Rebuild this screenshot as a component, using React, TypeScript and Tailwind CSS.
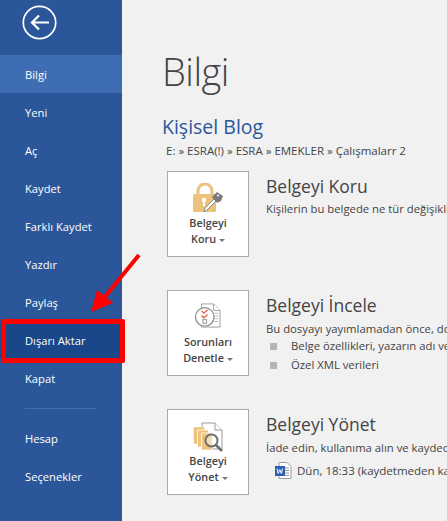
const font = { fontFamily: '"Open Sans", "Noto Sans", sans-serif' };

const items = ["Bilgi", "Yeni", "Aç", "Kaydet", "Farklı Kaydet", "Yazdır", "Paylaş", "Dışarı Aktar", "Kapat"];

function NavItem({ label }: { label: string }) {
  const bg = label === "Bilgi" ? "bg-[#3e6db3]" : label === "Dışarı Aktar" ? "bg-[#19478a]" : "";
  return (
    <div className={`h-[38px] flex items-center pl-[25px] pt-[2px] text-[11.2px] text-white whitespace-nowrap ${bg}`}>{label}</div>
  );
}

function LockIcon() {
  return (
    <svg width="32" height="30" viewBox="0 0 32 30">
      <path d="M6 12V8a7 7 0 0 1 14 0v4" fill="none" stroke="#edc27c" strokeWidth="3" />
      <rect x="1" y="11" width="23" height="18" rx="1.5" fill="#edc27c" />
      <circle cx="12" cy="17" r="2.2" fill="#fff" />
      <rect x="11" y="18" width="2" height="5" fill="#fff" />
      <path d="M12 28l1-3 9-9 2 2-9 9-3 2z" fill="#fff" stroke="#8a8a8a" strokeWidth="1" />
      <path d="M20 14l5-5 6 4-2 5-4 2-5-6z" fill="#7b7b7b" />
      <circle cx="26" cy="12.5" r="1" fill="#fff" />
    </svg>
  );
}

function InspectIcon() {
  return (
    <svg width="28" height="25" viewBox="0 0 30 27">
      <path d="M8 1h13l7 7v18H8z" fill="#fff" stroke="#9a9a9a" strokeWidth="1" />
      <path d="M21 1v7h7" fill="#fff" stroke="#9a9a9a" strokeWidth="1" />
      <path d="M22 11h4M22 14h4M22 17h4M22 20h4" stroke="#b5b5b5" strokeWidth="1" />
      <circle cx="11.5" cy="15" r="10" fill="#fff" stroke="#8f8f8f" strokeWidth="1.4" />
      <path d="M8 8.5l2.5 2.5 4-3.5M8 13.5l2.5 2.5 4-3.5" fill="none" stroke="#e0604c" strokeWidth="1.4" />
      <rect x="9.5" y="18" width="4" height="4" fill="#fff" stroke="#8f8f8f" strokeWidth="1" />
    </svg>
  );
}

function ManageIcon() {
  return (
    <svg width="30" height="30" viewBox="0 0 30 30">
      <path d="M9 1h13l7 7v19H9z" fill="#fff" stroke="#9a9a9a" strokeWidth="1" />
      <path d="M22 1v7h7" fill="#fff" stroke="#9a9a9a" strokeWidth="1" />
      <rect x="0.5" y="5" width="11" height="17" fill="#edc27c" stroke="#fff" strokeWidth="0.5" />
      <rect x="4.5" y="8" width="11" height="17" fill="#edc27c" stroke="#fff" strokeWidth="0.8" />
      <rect x="8.5" y="11" width="11" height="17" fill="#edc27c" stroke="#fff" strokeWidth="0.8" />
      <circle cx="18.5" cy="18.5" r="6" fill="#fff" fillOpacity="0.45" stroke="#6f6f6f" strokeWidth="2" />
      <path d="M23 23l6 6" stroke="#6f6f6f" strokeWidth="2.6" />
    </svg>
  );
}

function WordIcon() {
  return (
    <svg width="17" height="17" viewBox="0 0 17 17">
      <path d="M4 .5h8l4 4v12H4z" fill="#fff" stroke="#9a9a9a" />
      <path d="M10 6h4M10 8.5h4M10 11h4M10 13.5h4" stroke="#9a9a9a" />
      <rect x="0" y="4" width="10" height="10" fill="#2b5fb0" />
      <path d="M2 6.5l1.2 5 1.6-4 1.6 4 1.2-5" fill="none" stroke="#fff" strokeWidth="1" />
    </svg>
  );
}

function Tile({ icon, lines, pt }: { icon: React.ReactNode; lines: string[]; pt: string }) {
  return (
    <div className="flex flex-col items-center w-[82px] h-[86px] shrink-0 bg-white border border-[#ababab] text-[#444] text-[10.8px] leading-[16px] font-semibold">
      <div className={`h-[42px] flex items-start justify-center ${pt}`}>{icon}</div>
      <div className="mt-[1px] text-center">{lines[0]}</div>
      <div className="flex items-center gap-[3px]">
        {lines[1]}
        <span className="w-0 h-0 border-x-[3px] border-x-transparent border-t-[3px] border-t-[#777] mt-[2px]" />
      </div>
    </div>
  );
}

function Bullet({ text }: { text: string }) {
  return (
    <div className="flex items-center h-[19px] pl-[3px] whitespace-nowrap text-[11.3px] text-[#444]">
      <span className="w-[7px] h-[7px] bg-[#b5b5b5] mr-[14px] shrink-0" />
      {text}
    </div>
  );
}

export default function App() {
  return (
    <div className="relative flex w-[447px] h-[521px] overflow-hidden bg-[#f1f1f1]" style={font}>
      <aside className="w-[122px] shrink-0 bg-[#2b579a] flex flex-col">
        <div className="h-[55px] pl-[22px] pt-[5px]">
          <svg width="35" height="35" viewBox="0 0 35 35" fill="none" stroke="#fff">
            <circle cx="17.5" cy="17.5" r="16.2" strokeWidth="1.7" />
            <path d="M27 17.5H10M17 10.5l-7 7 7 7" strokeWidth="2.2" />
          </svg>
        </div>
        {items.map((i) => (
          <NavItem key={i} label={i} />
        ))}
        <div className="h-px bg-[#3e6db3] ml-[25px] w-[71px] mt-[11px] mb-[10px]" />
        <NavItem label="Hesap" />
        <NavItem label="Seçenekler" />
      </aside>

      <main className="flex-1 min-w-0 pl-[41px]">
        <h1 className="text-[38px] leading-[54px] font-light tracking-[-0.5px] text-[#444] -ml-px mt-[44px]">Bilgi</h1>
        <div className="text-[19.5px] leading-[26px] text-[#2b579a] -ml-px mt-[16px]">Kişisel Blog</div>
        <div className="text-[11.5px] leading-[16px] text-[#444] pl-[3px] mt-[3px] whitespace-nowrap">
          E: » ESRA(!) » ESRA » EMEKLER » Çalışmalarr 2
        </div>

        <section className="flex pl-[4px] mt-[12px]">
          <Tile pt="pt-[11px]" icon={<LockIcon />} lines={["Belgeyi", "Koru"]} />
          <div className="ml-[17px] whitespace-nowrap">
            <div className="text-[17.5px] leading-[24px] text-[#444] mt-[3px]">Belgeyi Koru</div>
            <div className="text-[11.3px] leading-[17px] text-[#444] mt-[2px]">Kişilerin bu belgede ne tür değişiklikler yapabileceğini denetleyin.</div>
          </div>
        </section>

        <section className="flex pl-[4px] mt-[33px]">
          <Tile pt="pt-[12px]" icon={<InspectIcon />} lines={["Sorunları", "Denetle"]} />
          <div className="ml-[17px] whitespace-nowrap">
            <div className="text-[17.5px] leading-[24px] text-[#444] mt-[3px]">Belgeyi İncele</div>
            <div className="text-[11.3px] leading-[17px] text-[#444] mt-[3px]">Bu dosyayı yayımlamadan önce, dosyanın şunları içerdiğini unutmayın:</div>
            <div className="pl-px">
              <Bullet text="Belge özellikleri, yazarın adı ve ilgili tarih" />
              <Bullet text="Özel XML verileri" />
            </div>
          </div>
        </section>

        <section className="flex pl-[4px] mt-[33px]">
          <Tile pt="pt-[12px]" icon={<ManageIcon />} lines={["Belgeyi", "Yönet"]} />
          <div className="ml-[17px] whitespace-nowrap">
            <div className="text-[17.5px] leading-[24px] text-[#444] mt-[3px]">Belgeyi Yönet</div>
            <div className="text-[11.3px] leading-[17px] text-[#444] mt-[3px]">İade edin, kullanıma alın ve kaydedilmemiş değişiklikleri kurtarın.</div>
            <div className="flex items-center gap-[5px] pl-[9px] mt-[6px] text-[11.5px] text-[#444]">
              <WordIcon />
              Dün, 18:33 (kaydetmeden kapattığımda)
            </div>
          </div>
        </section>
      </main>

      <div className="absolute left-[1px] top-[319px] w-[124px] h-[44px] border-[5px] border-[#ff0000] rounded-[2px]" />
      <svg className="absolute left-[85px] top-[250px]" width="60" height="70" viewBox="0 0 60 70">
        <path d="M54 5L14 54" stroke="#ff0000" strokeWidth="4" />
        <path d="M6 62l6-22 16 13z" fill="#ff0000" />
      </svg>
    </div>
  );
}
